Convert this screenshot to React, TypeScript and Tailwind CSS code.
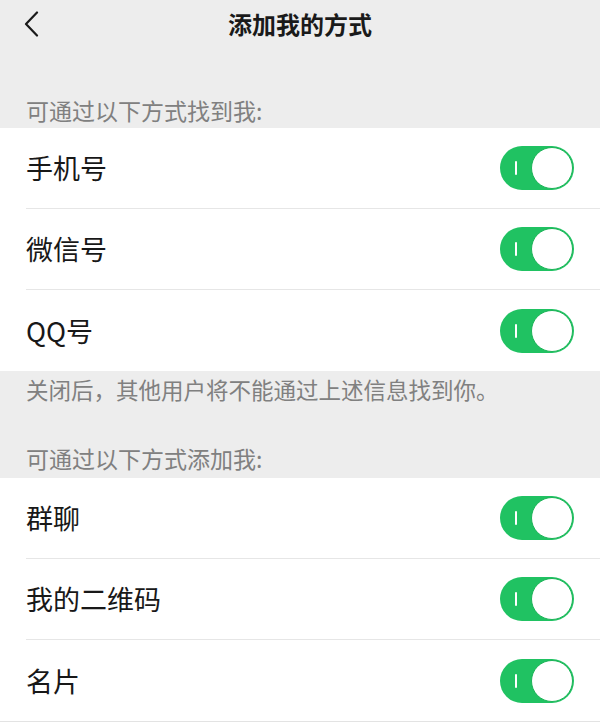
const font = { fontFamily: '"Noto Sans CJK SC", "Noto Sans", sans-serif' };

function Toggle() {
	return (
		<div className="relative h-[44px] w-[74px] rounded-full bg-[#20c262]">
			<div className="absolute left-[15px] top-[15px] h-[14px] w-[2px] rounded-full bg-white" />
			<div className="absolute right-[1px] top-[1px] h-[42px] w-[42px] rounded-full border border-[#1bb457] bg-white" />
		</div>
	);
}

function Row({ label, last }: { label: string; last?: boolean }) {
	return (
		<div className="flex h-[81px] items-center bg-white pl-[26px]">
			<div className={`flex h-full flex-1 items-center justify-between pr-[26px] ${last ? "" : "border-b border-[#e6e6e6]"}`}>
				<span className="text-[27px] leading-[30px] text-[#181818]">{label}</span>
				<Toggle />
			</div>
		</div>
	);
}

export default function App() {
	return (
		<div className="min-h-[722px] w-[600px] bg-[#ededed]" style={font}>
			<div className="relative flex h-[48px] items-center justify-center">
				<svg className="absolute left-[22px] top-[11px]" width="20" height="26" viewBox="0 0 20 26" fill="none">
					<path d="M15 1.5 L4 13 L15 24.5" stroke="#1a1a1a" strokeWidth="2.2" strokeLinecap="round" strokeLinejoin="round" />
				</svg>
				<span className="text-[24px] font-semibold leading-[30px] text-[#1a1a1a]">添加我的方式</span>
			</div>

			<div className="flex h-[80px] items-end pb-[6px] pl-[26px]">
				<span className="text-[23px] leading-[24px] text-[#808080]">可通过以下方式找到我:</span>
			</div>

			<div className="bg-white">
				<Row label="手机号" />
				<Row label="微信号" />
				<Row label="QQ号" last />
			</div>

			<div className="pl-[26px] pt-[6px]">
				<p className="text-[22.5px] leading-[24px] text-[#808080]">关闭后，其他用户将不能通过上述信息找到你。</p>
			</div>

			<div className="flex h-[77px] items-end pb-[8px] pl-[26px]">
				<span className="text-[23px] leading-[24px] text-[#808080]">可通过以下方式添加我:</span>
			</div>

			<div className="border-b border-[#e3e3e3] bg-white">
				<Row label="群聊" />
				<Row label="我的二维码" />
				<Row label="名片" last />
			</div>
		</div>
	);
}
